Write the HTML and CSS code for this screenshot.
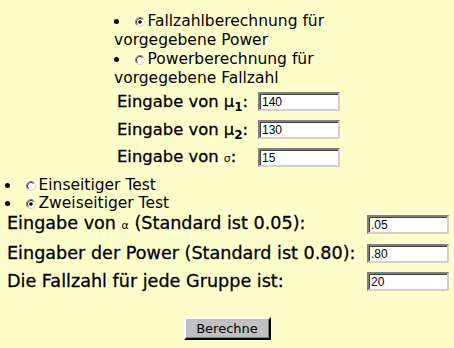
FILE: index.html
```html
<!DOCTYPE html>
<html lang="de">
<head>
    <meta charset="UTF-8">
    <title>Fallzahlberechnung</title>
    <link rel="stylesheet" href="styles.css">
</head>
<body>
    <form class="calc">
        <div class="top">
            <ul class="choices">
                <li>
                    <svg class="radio" width="10" height="10" viewBox="0 0 10 10">
                        <circle cx="5" cy="5" r="4.5" fill="#fff" stroke="#d4d0c8"/>
                        <path d="M1.8 8.2A4.5 4.5 0 0 1 8.2 1.8" fill="none" stroke="#808080"/>
                        <path d="M2.5 7.5A3.5 3.5 0 0 1 7.5 2.5" fill="none" stroke="#404040"/>
                        <circle cx="5" cy="5" r="1.8" fill="#000"/>
                    </svg>Fallzahlberechnung für vorgegebene Power</li>
                <li>
                    <svg class="radio" width="10" height="10" viewBox="0 0 10 10">
                        <circle cx="5" cy="5" r="4.5" fill="#fff" stroke="#d4d0c8"/>
                        <path d="M1.8 8.2A4.5 4.5 0 0 1 8.2 1.8" fill="none" stroke="#808080"/>
                        <path d="M2.5 7.5A3.5 3.5 0 0 1 7.5 2.5" fill="none" stroke="#404040"/>
                    </svg>Powerberechnung für vorgegebene Fallzahl</li>
            </ul>
            <div class="params">
                <label class="lbl">Eingabe von <span class="mu">μ</span><sub>1</sub>:</label>
                <input type="text" class="field" value="140">
                <label class="lbl">Eingabe von <span class="mu">μ</span><sub>2</sub>:</label>
                <input type="text" class="field" value="130">
                <label class="lbl">Eingabe von <span class="greek">σ</span>:</label>
                <input type="text" class="field" value="15">
            </div>
        </div>
        <ul class="choices tests">
            <li>
                <svg class="radio" width="10" height="10" viewBox="0 0 10 10">
                    <circle cx="5" cy="5" r="4.5" fill="#fff" stroke="#d4d0c8"/>
                    <path d="M1.8 8.2A4.5 4.5 0 0 1 8.2 1.8" fill="none" stroke="#808080"/>
                    <path d="M2.5 7.5A3.5 3.5 0 0 1 7.5 2.5" fill="none" stroke="#404040"/>
                </svg>Einseitiger Test</li>
            <li>
                <svg class="radio" width="10" height="10" viewBox="0 0 10 10">
                    <circle cx="5" cy="5" r="4.5" fill="#fff" stroke="#d4d0c8"/>
                    <path d="M1.8 8.2A4.5 4.5 0 0 1 8.2 1.8" fill="none" stroke="#808080"/>
                    <path d="M2.5 7.5A3.5 3.5 0 0 1 7.5 2.5" fill="none" stroke="#404040"/>
                    <circle cx="5" cy="5" r="1.8" fill="#000"/>
                </svg>Zweiseitiger Test</li>
        </ul>
        <div class="params wide">
            <label class="lbl">Eingabe von <span class="greek">α</span> (Standard ist 0.05):</label>
            <input type="text" class="field" value=".05">
            <label class="lbl">Eingaber der Power (Standard ist 0.80):</label>
            <input type="text" class="field" value=".80">
            <label class="lbl">Die Fallzahl für jede Gruppe ist:</label>
            <input type="text" class="field" value="20">
        </div>
        <div class="actions">
            <button type="button" class="btn">Berechne</button>
        </div>
    </form>
</body>
</html>
```

FILE: styles.css
```css
body {
    margin: 0;
    background-color: #ffffcc;
    font-family: "DejaVu Sans", Verdana, sans-serif;
    font-size: 15.5px;
    color: #000;
}

.calc {
    padding: 12px 5px 0 5px;
}

.top {
    width: 226px;
    margin: 0 auto;
}

.choices {
    list-style: disc inside;
    margin: 0;
    padding: 0;
    line-height: 19px;
}

.radio {
    margin: 0 3px 0 -1px;
    vertical-align: -1px;
}

.params {
    display: grid;
    grid-template-columns: 1fr 82px;
    row-gap: 8.5px;
    align-items: center;
    margin-top: 4px;
    padding-left: 3px;
}

.lbl {
    font-size: 16.4px;
    line-height: 19px;
    -webkit-text-stroke: 0.3px #000;
    white-space: nowrap;
}

.lbl sub {
    font-size: 12px;
    line-height: 0;
    font-weight: bold;
    -webkit-text-stroke: 0;
}

.greek {
    font-size: 11px;
    -webkit-text-stroke: 0;
}

.field {
    width: 82px;
    height: 19px;
    box-sizing: border-box;
    border: 2px solid;
    border-color: #808080 #d4d0c8 #d4d0c8 #808080;
    box-shadow: inset 1px 1px 0 #404040;
    background: #fff;
    font-family: "Liberation Sans Narrow", "Liberation Sans", Arial, sans-serif;
    font-size: 12px;
    padding: 1px 2px 0;
}

.tests {
    margin-top: 8px;
    line-height: 18px;
}

.wide {
    margin-top: 2px;
    row-gap: 9px;
    padding-left: 2px;
}

.wide .lbl {
    font-size: 17.6px;
}

.actions {
    display: flex;
    justify-content: center;
    margin-top: 26px;
}

.btn {
    width: 87px;
    height: 23px;
    background: #c0c0c0;
    border: 2px solid;
    border-color: #fff #000 #000 #fff;
    box-shadow: inset -1px -1px 0 #808080;
    font-family: "DejaVu Sans", Verdana, sans-serif;
    font-size: 13px;
    padding: 0;
    color: #000;
}
```
